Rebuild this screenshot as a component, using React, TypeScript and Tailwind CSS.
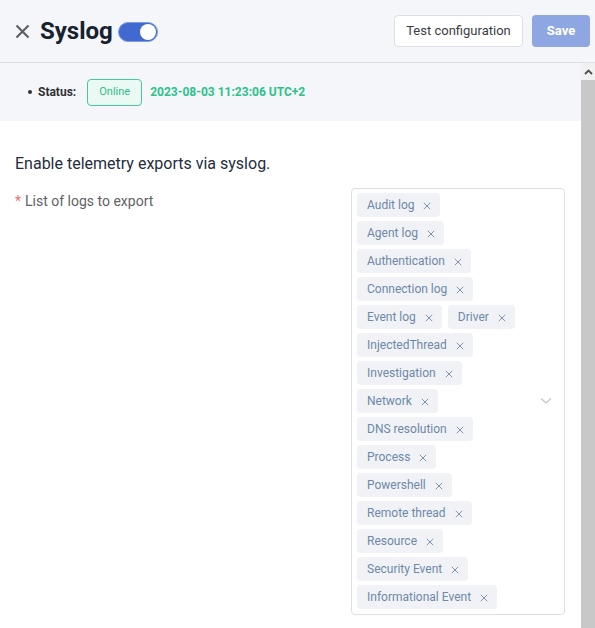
import React from "react";

const rows: string[][] = [
  ["Audit log"],
  ["Agent log"],
  ["Authentication"],
  ["Connection log"],
  ["Event log", "Driver"],
  ["InjectedThread"],
  ["Investigation"],
  ["Network"],
  ["DNS resolution"],
  ["Process"],
  ["Powershell"],
  ["Remote thread"],
  ["Resource"],
  ["Security Event"],
  ["Informational Event"],
];

function Tag({ label }: { label: string }) {
  return (
    <span className="flex h-[24px] items-center gap-[9px] rounded-[4px] bg-[#f0f2f5] pl-[10px] pr-[9px] text-[12px] text-[#6f88a9]">
      <span>{label}</span>
      <svg width="8" height="8" viewBox="0 0 8 8" className="mt-[1px]">
        <path d="M0.8 0.8 L7.2 7.2 M7.2 0.8 L0.8 7.2" stroke="#8094ae" strokeWidth="1" fill="none" />
      </svg>
    </span>
  );
}

export default function App() {
  return (
    <div className="flex h-[628px] w-[595px] flex-col overflow-hidden bg-white" style={{ fontFamily: "Roboto, 'Noto Sans', sans-serif" }}>
      {/* Header */}
      <div className="flex h-[63px] shrink-0 items-center border-b border-[#dcdfe6] bg-[#f5f6fa] pl-[15px] pr-[5px]">
        <svg width="15" height="15" viewBox="0 0 15 15" className="mt-[1px]">
          <path d="M1.5 1.5 L13.5 13.5 M13.5 1.5 L1.5 13.5" stroke="#5f6166" strokeWidth="2.2" fill="none" />
        </svg>
        <span className="ml-[10px] text-[24px] font-bold leading-none text-[#17222f]">Syslog</span>
        <div className="ml-[5px] mt-[1px] flex h-[20px] w-[40px] items-center justify-end rounded-full border border-[#7f9be0] bg-[#4169cf] pr-[1px]">
          <div className="h-[16px] w-[16px] rounded-full bg-white" />
        </div>
        <div className="ml-auto flex items-center gap-[9px] pb-[1px]">
          <button className="h-[32px] w-[129px] rounded-[4px] border border-[#dcdfe6] bg-white text-[13px] font-normal text-[#3a3d44]">
            Test configuration
          </button>
          <button className="h-[32px] w-[58px] rounded-[4px] bg-[#8ea7e2] text-[13px] font-bold text-white">Save</button>
        </div>
      </div>

      {/* Body */}
      <div className="flex min-h-0 flex-1">
        <div className="flex w-[581px] flex-col">
          <div className="flex h-[58px] items-center bg-[#f5f6fa] pl-[28px]">
            <span className="h-[4px] w-[4px] rounded-full bg-[#303133]" />
            <span className="ml-[6px] text-[12px] font-bold text-[#303133]">Status:</span>
            <span className="ml-[11px] flex h-[27px] w-[55px] items-center justify-center rounded-[4px] border border-[#46c99c] bg-[#eaf9f3] text-[11px] font-normal text-[#2fbd89]">
              Online
            </span>
            <span className="ml-[8px] text-[12px] font-bold text-[#2cc28b]">2023-08-03 11:23:06 UTC+2</span>
          </div>

          <div className="pl-[15px] pt-[32px] text-[16px] leading-[22px] text-[#1f2d3d]">Enable telemetry exports via syslog.</div>

          <div className="mt-[13px] flex">
            <div className="w-[351px] pl-[15px] pt-[3px] text-[14px] leading-[20px] text-[#606266]">
              <span className="mr-[4px] text-[#f56c6c]">*</span>List of logs to export
            </div>
            <div className="relative flex h-[427px] w-[214px] flex-col gap-[4px] rounded-[4px] border border-[#dcdfe6] py-[4px] pl-[5px]">
              {rows.map((r, i) => (
                <div key={i} className="flex gap-[6px]">
                  {r.map((t) => (
                    <Tag key={t} label={t} />
                  ))}
                </div>
              ))}
              <svg width="12" height="8" viewBox="0 0 12 8" className="absolute right-[12px] top-[208px]">
                <path d="M1 1.5 L6 6 L11 1.5" stroke="#c0c4cc" strokeWidth="1.2" fill="none" />
              </svg>
            </div>
          </div>
        </div>

        {/* Scrollbar */}
        <div className="flex w-[14px] flex-col">
          <div className="flex h-[17px] items-center justify-center bg-[#f1f1f1]">
            <svg width="9" height="6" viewBox="0 0 9 6">
              <path d="M1 5 L4.5 1.5 L8 5" stroke="#505050" strokeWidth="1.8" fill="none" />
            </svg>
          </div>
          <div className="flex-1 bg-[#c8c8c8]" />
        </div>
      </div>
    </div>
  );
}
